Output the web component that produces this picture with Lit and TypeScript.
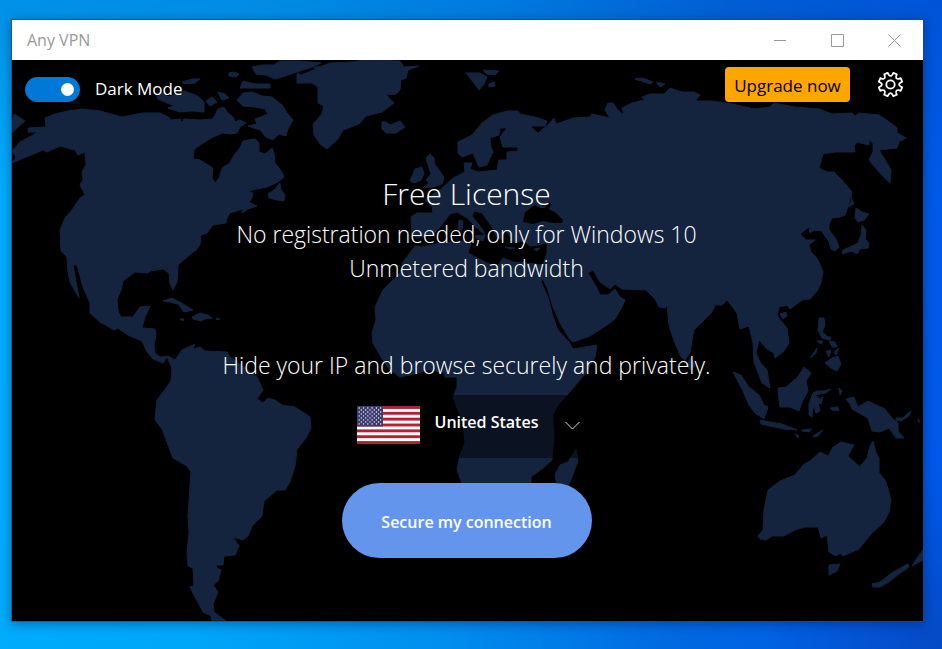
import { LitElement, html, svg, css } from "lit";
import { customElement, property, state } from "lit/decorators.js";

/** Outlines of the land masses, drawn on a 911 x 561 canvas that starts at (12, 60). */
const LAND = [
  // The Americas
  "M12 163L16 157 12 151 20 142 33 135 38 132 28 132 28 128 46 127 45 118 55 114 68 111 82 109 100 111 122 117 143 113 160 113 168 117 171 120 180 119 182 123 184 119 200 120 213 119 218 109 224 107 227 112 233 117 235 122 240 120 246 123 240 127 237 133 230 134 223 133 213 137 200 145 194 150 193 159 200 160 213 168 212 178 215 183 219 178 222 168 230 163 234 155 240 148 243 141 248 140 255 139 259 143 259 152 265 154 272 148 274 153 275 163 282 172 284 177 278 182 267 187 247 191 253 193 252 198 249 202 257 206 248 209 242 213 243 209 230 213 227 218 226 223 213 225 207 233 201 235 200 245 196 250 187 257 178 265 177 282 173 290 170 283 169 273 163 269 150 271 148 273 135 272 123 281 121 290 117 300 118 311 121 317 133 317 140 307 150 306 145 317 142 328 155 329 156 335 154 345 155 353 160 357 168 356 175 360 182 350 195 344 193 349 200 347 205 351 227 352 230 357 245 368 257 377 263 390 257 399 263 403 268 398 275 400 282 405 295 407 310 417 311 428 306 438 297 449 295 466 290 482 285 490 277 490 264 501 262 516 252 526 248 536 243 540 233 537 239 546 235 555 224 556 223 565 216 565 217 568 221 570 218 581 213 585 218 592 213 604 214 612 226 621 212 621 211 616 203 612 195 597 190 587 194 586 193 568 188 566 187 552 189 532 188 516 191 472 187 466 173 458 162 429 155 420 156 410 157 400 163 392 171 381 172 368 167 357 163 363 153 359 147 352 142 341 128 335 118 328 114 330 100 322 90 313 90 303 83 287 77 265 73 265 79 298 70 282 68 272 67 257 61 251 60 230 65 218 72 210 80 198 85 195 80 185 83 180 82 172 86 165 85 152 78 155 75 150 60 146 47 152 43 150Z",
  // Canadian archipelago
  "M12 123L14 114 19 117 25 121 20 125 12 133Z",
  "M182 82L192 79 200 79 195 83 184 84ZM229 73L234 72 239 74 236 77 229 76ZM240 88L243 81 255 84 270 84 270 88Z",
  "M156 93L163 93 169 97 184 91 193 94 199 97 204 102 204 112 192 111 180 112 168 108 174 106 158 99Z",
  "M206 101L212 97 217 102 210 106ZM218 92L225 94 229 98 222 100Z",
  "M237 100L243 93 252 92 262 96 272 97 282 105 287 113 293 120 288 129 286 136 279 134 273 140 266 137 260 130 248 126 257 124 255 119 263 116 268 114 265 109 255 107 243 106Z",
  "M252 67L262 65 274 65 280 61 300 61 321 63 313 67 300 71 285 76 275 79 266 75 256 74Z",
  "M268 194L274 190 280 183 281 190 285 195 284 201 277 200 269 198Z",
  // Greenland
  "M297 74L312 68 322 66 330 63 352 62 365 60 400 61 404 67 419 66 408 70 406 78 401 80 400 90 396 94 386 95 394 103 382 112 366 116 359 124 343 130 338 139 327 149 320 144 314 135 313 124 322 114 324 106 318 103 318 87 312 83 297 83Z",
  // Iceland and Svalbard
  "M382 122L386 122 390 125 400 121 405 127 396 133 386 133 382 129Z",
  "M466 73L480 73 487 77 484 84 479 90 474 83ZM483 70L499 71 495 75 487 74ZM489 84L494 82 495 86 489 87Z",
  // British Isles
  "M426 158L430 154 434 158 435 165 440 171 444 178 442 184 433 187 423 188 429 183 426 180 431 174 429 168ZM410 181L415 169 422 167 424 174 421 180 414 183Z",
  // Eurasia and Africa
  "M458 142L464 139 472 135 482 123 493 115 507 111 518 111 520 114 535 117 547 121 545 126 530 126 538 133 543 129 548 125 554 118 556 124 562 122 573 118 590 117 592 114 610 118 605 110 608 103 613 103 618 110 624 115 622 108 632 103 644 100 642 97 650 94 664 94 670 88 682 92 694 92 700 95 695 101 712 101 732 104 755 109 770 107 774 103 795 107 819 109 832 114 852 113 855 116 859 113 879 115 888 121 897 128 897 133 906 138 899 142 897 148 879 150 884 158 891 170 890 183 879 172 869 160 873 152 873 143 869 140 869 145 857 142 854 146 855 152 835 152 823 154 819 168 827 172 834 172 842 180 852 192 849 203 845 215 840 217 832 218 829 224 829 230 836 239 839 247 835 251 831 249 829 241 824 235 822 231 814 230 810 233 809 227 800 234 806 240 815 240 809 245 811 252 816 257 819 262 823 272 821 283 817 291 810 299 802 300 790 309 787 305 779 307 777 316 787 328 789 343 784 351 775 358 774 353 767 349 759 340 756 353 760 362 767 370 770 388 762 383 754 362 753 343 749 326 740 329 737 313 727 300 722 305 715 305 712 312 694 330 692 340 690 353 685 360 681 357 674 341 669 325 667 305 665 308 659 307 655 299 646 290 622 289 615 284 610 289 600 282 593 270 588 273 597 288 600 295 608 295 615 289 620 297 625 300 622 307 615 319 607 325 590 336 573 342 569 338 560 323 553 307 548 290 543 279 541 282 548 297 553 317 558 330 569 342 573 349 585 347 597 345 595 357 585 374 567 395 558 405 553 415 553 425 554 435 552 460 543 468 531 477 531 490 530 510 515 530 495 535 480 525 470 505 462 483 457 470 460 455 465 443 463 423 454 400 453 397 457 387 457 377 445 377 443 372 427 370 415 374 400 377 390 370 381 357 373 343 372 333 376 320 375 307 383 290 400 273 403 262 415 246 422 247 440 243 463 241 471 243 468 253 487 263 497 267 503 258 513 262 527 263 543 265 547 253 547 243 538 245 530 246 524 241 513 242 508 233 504 230 502 240 497 237 492 227 482 213 474 211 472 216 483 230 485 235 476 227 467 218 457 212 450 214 443 223 433 235 417 238 412 235 411 217 417 213 433 213 432 206 425 200 433 194 440 190 453 178 465 172 464 163 472 163 470 169 478 172 497 170 499 160 507 160 507 152 518 151 518 147 503 147 500 137 507 128 500 128 499 135 490 138 491 147 493 152 487 165 479 167 473 153 462 157 458 153Z",
  "M635 79L643 78 653 82 650 84ZM656 82L665 84 660 87Z",
  // Mediterranean islands
  "M475 236L485 235 483 241 476 238ZM459 220L463 221 462 230 458 229ZM534 249L540 248 537 251ZM505 247L515 248 510 249Z",
  // Madagascar
  "M576 449L578 461 570 482 566 490 557 485 555 475 560 465 568 462Z",
  // Caribbean
  "M163 301L172 298 183 304 193 310 184 312 178 304 170 302ZM192 317L200 313 208 315 212 318 205 319 201 321 193 319ZM180 319L184 319 183 321ZM216 318L220 319 217 320Z",
  // Japan, Sakhalin, Taiwan, Hainan
  "M848 207L852 200 850 195 854 204ZM855 218L856 208 862 212 869 214 864 220 858 222ZM862 225L866 230 865 239 869 243 868 248 860 249 857 254 852 251 842 254 843 250 852 246 858 243 861 235ZM780 314L786 312 787 316 783 319Z",
  // Philippines
  "M819 318L824 318 825 325 822 332 828 337 831 337 830 340 822 338 818 330ZM829 341L835 342 837 347 832 347ZM826 351L831 350 829 357ZM834 352L839 348 836 355ZM817 341L823 341 821 344ZM810 358L817 348 816 353ZM825 363L832 358 838 356 841 364 837 371 831 368Z",
  // Sri Lanka
  "M690 358L695 365 691 370 687 366Z",
  // Indonesia
  "M733 372L741 375 748 386 759 395 764 405 768 407 764 419 755 413 749 405 743 391Z",
  "M760 420L770 422 782 424 797 430 784 429 770 426 761 424Z",
  "M778 388L786 387 797 378 804 367 811 373 806 381 808 391 802 402 799 411 790 407 780 407 779 400Z",
  "M813 393L817 391 824 391 831 389 826 393 815 395 820 399 823 397 821 404 818 403 820 411 816 413 813 405 812 417 809 415 809 404ZM839 388L842 391 840 395ZM830 408L838 407 839 411 832 410ZM802 430L812 429 809 432 802 431ZM813 436L823 430 818 436 813 437ZM795 434L799 436 798 438Z",
  // New Guinea and New Britain
  "M846 399L854 397 858 407 868 401 885 409 892 418 898 423 898 431 904 438 896 438 889 428 880 432 872 431 868 418 852 409 850 404Z",
  "M896 418L903 418 908 413 911 411 909 416 901 421 896 420ZM918 419L920 422 919 422Z",
  // Australia, Tasmania, New Zealand
  "M758 536L763 530 764 510 768 490 780 481 795 475 803 465 810 461 820 452 828 456 833 447 841 442 854 445 848 456 860 467 867 458 870 446 873 441 876 453 879 458 879 473 885 480 888 489 891 500 889 512 884 522 871 534 859 549 843 556 840 553 836 556 829 552 827 535 821 538 818 527 805 527 795 530 784 536 772 536 766 540 760 539Z",
  "M829 565L840 564 837 571 829 575ZM872 584L880 582 893 572 908 564 909 567 899 574 889 582 880 587 873 587ZM912 566L917 558 923 550 923 560Z",
];

/** Inland waters painted back over the continents. */
const WATER = [
  "M523 222L525 212 535 205 540 208 545 208 548 202 551 204 549 209 556 213 563 220 562 223 553 223 543 221 533 224Z",
  "M248 113L254 110 260 113 258 117 250 117Z",
  "M299 72L314 67 315 69 300 75Z",
];

function gearOutline(teeth: number, centre: number): string {
  const at = (deg: number, r: number) => {
    const a = (deg * Math.PI) / 180;
    return `${(centre + r * Math.cos(a)).toFixed(2)} ${(centre + r * Math.sin(a)).toFixed(2)}`;
  };
  const step = 360 / teeth;
  let d = "";
  for (let i = 0; i < teeth; i++) {
    const a = (i + 0.5) * step;
    d += `${i ? "L" : "M"}${at(a - 9, 12)}L${at(a + 9, 12)}`;
    d += `L${at(a + 12, 10)}Q${at(a + step / 2, 7.4)} ${at(a + step - 12, 10)}`;
  }
  return d + "Z";
}

@customElement("world-map")
export class WorldMap extends LitElement {
  static styles = css`
    :host { display: block; }
    .map { display: block; width: 100%; height: 100%; }
    .land { fill: #14243f; stroke: #14243f; stroke-width: 1; stroke-linejoin: round; }
    .water { fill: #000; }
  `;
  render() {
    return html`<svg class="map" viewBox="12 60 911 561" preserveAspectRatio="xMidYMid slice" aria-hidden="true">
      <path class="land" d=${LAND.join("")}></path>
      <path class="water" d=${WATER.join("")}></path>
    </svg>`;
  }
}

@customElement("us-flag")
export class UsFlag extends LitElement {
  static styles = css`
    :host { display: block; }
    .flag { display: block; width: 63px; height: 38px; }
  `;
  render() {
    const stripes = [0, 2, 4, 6, 8, 10, 12];
    const stars: [number, number][] = [];
    for (let row = 0; row < 9; row++) {
      const odd = row % 2;
      for (let col = 0; col < (odd ? 5 : 6); col++) {
        stars.push([2.2 + col * 4.3 + (odd ? 2.15 : 0), 2 + row * 2.05]);
      }
    }
    return html`<svg class="flag" viewBox="0 0 63 39" preserveAspectRatio="none" aria-hidden="true">
      <rect width="63" height="39" fill="#fff"></rect>
      ${stripes.map((n) => svg`<rect y=${n * 3} width="63" height="3" fill="#b22234"></rect>`)}
      <rect width="26" height="21" fill="#3c3b6e"></rect>
      ${stars.map(([x, y]) => svg`<circle cx=${x} cy=${y} r="0.7" fill="#fff"></circle>`)}
    </svg>`;
  }
}

@customElement("title-bar")
export class TitleBar extends LitElement {
  @property() heading = "";
  static styles = css`
    :host { display: flex; align-items: stretch; height: 40px; background: #fff; color: #999; }
    .name { flex: 1; margin: 0; padding-left: 15px; font: 400 16px/40px "Open Sans", "Noto Sans", sans-serif; }
    .control { width: 57px; padding: 0 1px 0 0; border: 0; background: none; color: inherit; display: grid; place-items: center; }
    .glyph { display: block; width: 13px; height: 13px; fill: none; stroke: currentColor; }
  `;
  render() {
    const shapes = [
      ["Minimize", "M0 6.5H12"],
      ["Maximize", "M.5.5H12.5V12.5H.5Z"],
      ["Close", "M.5.5L12.5 12.5M12.5.5L.5 12.5"],
    ];
    return html`
      <h1 class="name">${this.heading}</h1>
      ${shapes.map(
        ([label, d]) => html`<button class="control" aria-label=${label}>
          <svg class="glyph" viewBox="0 0 13 13"><path d=${d}></path></svg>
        </button>`,
      )}
    `;
  }
}

@customElement("app-root")
export class AppRoot extends LitElement {
  @state() private dark = true;

  static styles = css`
    :host {
      box-sizing: border-box;
      display: flex;
      min-height: 100vh;
      padding: 20px 19px 28px 12px;
      font-family: "Open Sans", "Noto Sans", sans-serif;
      background:
        linear-gradient(180deg, rgba(0, 60, 170, 0.25), rgba(0, 60, 170, 0) 30%),
        radial-gradient(circle at 100% 100%, rgba(10, 60, 160, 0.5), rgba(10, 60, 160, 0) 180px),
        linear-gradient(95deg, #00adfc 0%, #00a6f8 25%, #008eee 50%, #0068e0 74%, #0057e8 100%);
    }
    .window {
      flex: 1;
      display: flex;
      flex-direction: column;
      box-shadow: 0 0 0 1px rgba(40, 70, 110, 0.6), 0 2px 10px 1px rgba(0, 20, 60, 0.4);
    }
    .stage { flex: 1; display: grid; background: #000; color: #fff; overflow: hidden; }
    .backdrop, .content { grid-area: 1 / 1; min-width: 0; min-height: 0; }
    .backdrop { contain: size; }
    .content { z-index: 1; display: flex; flex-direction: column; }
    .toolbar { display: flex; align-items: flex-start; padding: 7px 19px 0 13px; }
    .toggle { display: flex; align-items: center; gap: 15px; padding-top: 4px; font-size: 17px; line-height: 36px; }
    .switch {
      appearance: none;
      width: 55px;
      height: 25px;
      margin: 0;
      padding: 6px;
      box-sizing: border-box;
      border-radius: 13px;
      background: #0078d7;
      display: flex;
    }
    .switch::before { content: ""; width: 13px; height: 13px; border-radius: 50%; background: #fff; }
    .switch:checked { justify-content: flex-end; }
    .upgrade {
      margin-left: auto;
      width: 125px;
      height: 35px;
      padding: 2px 0 0;
      border: 0;
      border-radius: 4px;
      background: #ffa500;
      color: #000;
      font: inherit;
      font-size: 17px;
      white-space: nowrap;
    }
    .settings { margin: 4px 0 0 27px; padding: 0; border: 0; background: none; color: #fff; }
    .gear { display: block; width: 27px; height: 27px; fill: none; stroke: currentColor; stroke-width: 1.8; stroke-linejoin: round; }
    .hero { display: flex; flex-direction: column; align-items: center; padding: 64px 2px 0 0; text-align: center; font-weight: 300; }
    .plan { margin: 0; font-size: 30px; line-height: 46px; font-weight: 300; }
    .line { margin: 0; font-size: 23px; line-height: 34px; }
    .pitch { margin-top: 63px; margin-bottom: 13px; }
    .country {
      position: relative;
      box-sizing: border-box;
      width: 250px;
      height: 63px;
      display: flex;
      align-items: center;
      gap: 15px;
      padding: 0 0 3px 15px;
      background: rgba(0, 0, 0, 0.45);
    }
    .picker {
      appearance: none;
      flex: 1;
      min-width: 0;
      height: 60px;
      padding: 0 0 6px;
      border: 0;
      background: none;
      color: #fff;
      font: 600 16px/24px "Open Sans", "Noto Sans", sans-serif;
    }
    .chevron { position: absolute; right: 12px; top: 26px; width: 15px; height: 10px; fill: none; stroke: #ddd; pointer-events: none; }
    .connect {
      width: 250px;
      height: 75px;
      margin-top: 25px;
      padding: 2px 0 0;
      border: 0;
      border-radius: 38px;
      background: #6495ed;
      color: #fff;
      font: 600 16px/24px "Open Sans", "Noto Sans", sans-serif;
    }
  `;

  render() {
    return html`
      <main class="window">
        <title-bar heading="Any VPN"></title-bar>
        <section class="stage">
          <world-map class="backdrop"></world-map>
          <div class="content">
            <div class="toolbar">
              <label class="toggle">
                <input
                  class="switch"
                  type="checkbox"
                  role="switch"
                  .checked=${this.dark}
                  @change=${(e: Event) => (this.dark = (e.target as HTMLInputElement).checked)}
                />
                Dark Mode
              </label>
              <button class="upgrade">Upgrade now</button>
              <button class="settings" aria-label="Settings">
                <svg class="gear" viewBox="0 0 27 27">
                  <path d=${gearOutline(8, 13.5)}></path>
                  <circle cx="13.5" cy="13.5" r="4.2"></circle>
                </svg>
              </button>
            </div>
            <div class="hero">
              <h2 class="plan">Free License</h2>
              <p class="line">No registration needed, only for Windows 10</p>
              <p class="line">Unmetered bandwidth</p>
              <p class="line pitch">Hide your IP and browse securely and privately.</p>
              <div class="country">
                <us-flag></us-flag>
                <select class="picker" aria-label="Country">
                  <option>United States</option>
                </select>
                <svg class="chevron" viewBox="0 0 15 10" aria-hidden="true"><path d="M.5 1L7.5 8 14.5 1"></path></svg>
              </div>
              <button class="connect">Secure my connection</button>
            </div>
          </div>
        </section>
      </main>
    `;
  }
}
